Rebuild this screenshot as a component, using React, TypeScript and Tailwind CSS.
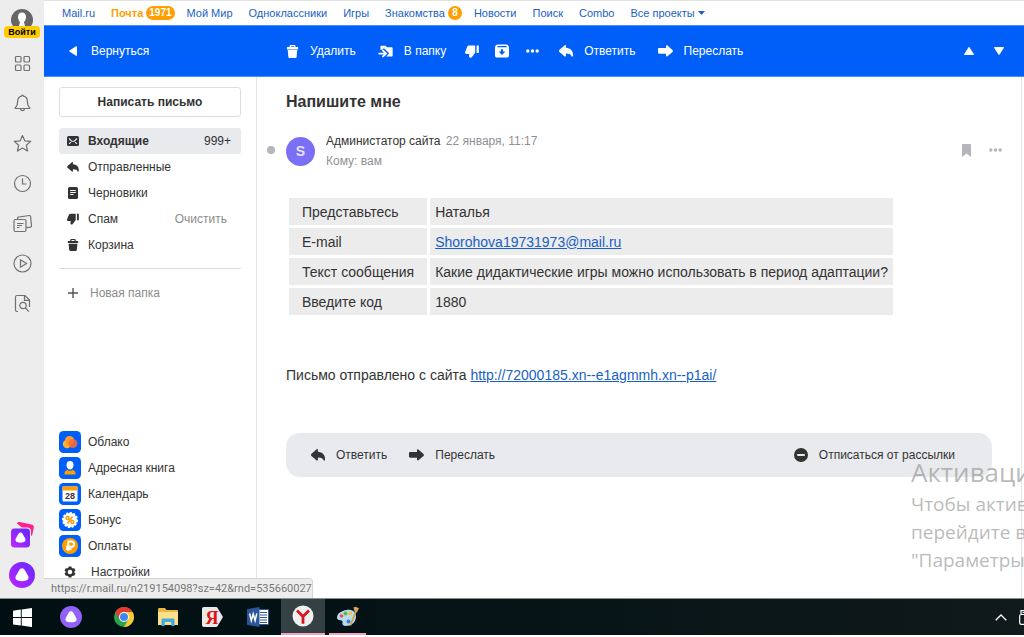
import { ReactNode } from "react";

type IconProps = { className?: string };

const TrashIcon = ({ className }: IconProps) => (
  <svg viewBox="0 0 14 14" fill="currentColor" className={className}>
    <path d="M1 2.200h2.800V1.400C3.800.6 4.400 0 5.200 0h3.600c.8 0 1.400.6 1.400 1.400v.8H13v2.600H1zM5.300 1.300v.9h3.400v-.9zM1.900 5.400h10.200l-.6 7.200c-.1.900-.6 1.400-1.500 1.400H4c-.9 0-1.400-.5-1.500-1.400z" />
  </svg>
);

const ReplyIcon = ({ className }: IconProps) => (
  <svg viewBox="0 0 14 12" fill="currentColor" className={className}>
    <path d="M6.900.6v2.200c4.600.3 7.100 3.100 7.100 7 0 .7 0 1.200-.1 1.700h-1.300c-.4-1.900-2.100-2.900-5.700-2.900v2.300c0 .7-.7.900-1.200.5L.5 7C-.2 6.400-.2 5.400.5 4.800L5.700.200c.5-.4 1.200-.200 1.200.4z" />
  </svg>
);

const ForwardIcon = ({ className }: IconProps) => (
  <svg viewBox="0 0 15 12" fill="currentColor" className={className}>
    <path d="M8 1v2H1.300C.4 3 0 3.500 0 4.300v3c0 .9.4 1.400 1.300 1.400H8v2c0 .8.8 1.100 1.400.6l5.100-4.400c.6-.5.6-1.500 0-2L9.400.4C8.800-.1 8 .2 8 1z" />
  </svg>
);

const ThumbIcon = ({ className }: IconProps) => (
  <svg viewBox="0 0 14 13" fill="currentColor" className={className}>
    <path d="M4.200.500h6v7.300l-3.500 4.400c-1.100 1.200-3 .500-2.700-1.200l.4-2.100H1.500C.3 8.900-.3 8 .1 6.900l2-5C2.500 1 3.200.5 4.200.5zM11.600.500h2.200v7.500h-2.200z" />
  </svg>
);

const FolderIcon = ({ className }: IconProps) => (
  <svg viewBox="0 0 16 14" fill="currentColor" className={className}>
    <path d="M2.500 5V2.200C2.500 1.300 3 .8 3.900.8H8l1.500 1.600h4.800c.9 0 1.400.5 1.400 1.400v7.300c0 .9-.5 1.400-1.400 1.400H8.700L12 9 6.200 3.500 4.600 5.100z" />
    <path d="M.5 9.200h7M4.700 5.600l3.900 3.600-3.900 3.600" fill="none" stroke="currentColor" strokeWidth="1.900" />
  </svg>
);

const ArchiveIcon = ({ className }: IconProps) => (
  <svg viewBox="0 0 14 14" fill="currentColor" fillRule="evenodd" className={className}>
    <path d="M3 .5h8c1.500 0 3 1.300 3 3v8c0 1.400-.7 2-2 2H2c-1.300 0-2-.6-2-2v-8c0-1.700 1.500-3 3-3zM2.800 2.100L2 3.300h10l-.8-1.200zM5.900 5.200v2.300H3.600L7 11l3.400-3.500H8.100V5.200z" />
  </svg>
);

const DotsIcon = ({ className }: IconProps) => (
  <svg viewBox="0 0 13 4" fill="currentColor" className={className}>
    <circle cx="1.800" cy="2" r="1.700" />
    <circle cx="6.500" cy="2" r="1.700" />
    <circle cx="11.200" cy="2" r="1.700" />
  </svg>
);

const MailIcon = ({ className }: IconProps) => (
  <svg viewBox="0 0 12 10" className={className}>
    <rect width="12" height="10" rx="1.500" fill="currentColor" />
    <path d="M2 2.500l2.700 2.700h2.600L10 2.500M2 7.800l2-1.700M10 7.800L8 6.100" stroke="#e9eaee" strokeWidth="1.100" fill="none" />
  </svg>
);

const DraftIcon = ({ className }: IconProps) => (
  <svg viewBox="0 0 12 12" className={className}>
    <rect x="1" width="10" height="12" rx="1.600" fill="currentColor" />
    <path d="M3.200 3.500h5.600M3.200 5.500h5.600M3.200 7.500h3.300" stroke="#fff" strokeWidth="1" />
  </svg>
);

const GearIcon = ({ className }: IconProps) => (
  <svg viewBox="0 0 12 12" className={className}>
    <path d="M6 .4v11.200M1.200 3.200l9.600 5.600M10.800 3.200L1.200 8.800" stroke="currentColor" strokeWidth="3" />
    <circle cx="6" cy="6" r="4.500" fill="currentColor" />
    <circle cx="6" cy="6" r="2.300" fill="#fff" />
  </svg>
);

const AliceMark = ({ className, round }: IconProps & { round?: boolean }) => (
  <svg viewBox="0 0 26 26" className={className}>
    <defs>
      <linearGradient id="alice" x1="0" y1="1" x2="1" y2="0">
        <stop offset="0" stopColor="#c026ff" />
        <stop offset="1" stopColor="#5f29ff" />
      </linearGradient>
    </defs>
    {round ? (
      <circle cx="13" cy="13" r="13" fill="url(#alice)" />
    ) : (
      <>
        <path d="M8 1.600C8.400.400 9.200-.100 10.500.100l12 2.400c1.700.4 2.600 1.700 2.200 3.400L23 14z" fill="#ff1f8f" />
        <rect x="1" y="5.500" width="21" height="21" rx="4" fill="#ededed" />
        <rect x="2" y="6.500" width="19" height="19" rx="3.500" fill="url(#alice)" />
      </>
    )}
    <path
      d={
        round
          ? "M13 6.200c1.300 0 2.100.7 2.900 2.100l3.200 5.800c1.500 2.900-.8 5.200-6.100 5.200s-7.600-2.300-6.100-5.200l3.200-5.800c.8-1.400 1.600-2.100 2.900-2.100z"
          : "M11.500 10.500c1 0 1.600.6 2.200 1.600l2.500 4.500c1.100 2.200-.6 4.200-4.700 4.200s-5.800-2-4.700-4.200l2.500-4.500c.6-1 1.200-1.600 2.200-1.600z"
      }
      fill="#fff"
    />
  </svg>
);

const navLinks: { label: string; badge?: string; active?: boolean; arrow?: boolean }[] = [
  { label: "Mail.ru" },
  { label: "Почта", badge: "1971", active: true },
  { label: "Мой Мир" },
  { label: "Одноклассники" },
  { label: "Игры" },
  { label: "Знакомства", badge: "8" },
  { label: "Новости" },
  { label: "Поиск" },
  { label: "Combo" },
  { label: "Все проекты", arrow: true },
];

const folders = [
  { label: "Входящие", icon: <MailIcon className="w-3 h-[10px]" />, count: "999+" },
  { label: "Отправленные", icon: <ReplyIcon className="w-3 h-[10px]" /> },
  { label: "Черновики", icon: <DraftIcon className="size-3" /> },
  { label: "Спам", icon: <ThumbIcon className="w-3 h-3" />, action: "Очистить" },
  { label: "Корзина", icon: <TrashIcon className="size-3" /> },
];

const services: { label: string; icon: ReactNode }[] = [
  {
    label: "Облако",
    icon: (
      <>
        <circle cx="8" cy="13" r="4.200" fill="#ffb02e" />
        <circle cx="10.500" cy="9.500" r="4.500" fill="#ff9e2c" />
        <circle cx="13.800" cy="12.500" r="4.600" fill="#ff6a33" fillOpacity=".85" />
      </>
    ),
  },
  {
    label: "Адресная книга",
    icon: (
      <>
        <path d="M11 4c2.300 0 3.500 1.500 3.500 4S13 12.500 11 12.500 7.500 10.500 7.500 8 8.700 4 11 4z" fill="#fff" />
        <path d="M5.500 17.500v-1.500c0-2 1.500-2.800 3.300-3.100.8 1.200 3.600 1.200 4.400 0 1.800.3 3.300 1.100 3.300 3.100v1.500z" fill="#ff9e00" />
      </>
    ),
  },
  {
    label: "Календарь",
    icon: (
      <>
        <rect x="3.500" y="3.500" width="15" height="15" rx="1" fill="#fff" />
        <path d="M3.500 3.500h15v4h-15z" fill="#ff9e00" />
        <text x="11" y="15.500" textAnchor="middle" fontSize="9" fontWeight="700" fill="#333">
          28
        </text>
      </>
    ),
  },
  {
    label: "Бонус",
    icon: (
      <>
        <circle cx="11" cy="11" r="7" fill="#fff" stroke="#fff" strokeWidth="2" strokeDasharray="2.200 1.400" />
        <circle cx="8.600" cy="9" r="1.500" fill="none" stroke="#ff9e00" strokeWidth="1.500" />
        <circle cx="13.400" cy="13" r="1.500" fill="none" stroke="#ff9e00" strokeWidth="1.500" />
        <path d="M13.500 7.500l-5 7" stroke="#ff9e00" strokeWidth="1.500" />
      </>
    ),
  },
  {
    label: "Оплаты",
    icon: (
      <>
        <circle cx="11" cy="11" r="8" fill="#ff9e00" />
        <path d="M9.300 16V6.500h2.900c3.900 0 3.900 5.300 0 5.300H7M7 14h5.500" fill="none" stroke="#fff" strokeWidth="1.900" />
      </>
    ),
  },
];

const fields = [
  { name: "Представьтесь", value: "Наталья" },
  { name: "E-mail", value: "Shorohova19731973@mail.ru", link: true },
  { name: "Текст сообщения", value: "Какие дидактические игры можно использовать в период адаптации?" },
  { name: "Введите код", value: "1880" },
];

const railIcons: { label: string; icon: ReactNode }[] = [
  {
    label: "Табло",
    icon: (
      <>
        <rect x="2.500" y="2.500" width="5.500" height="5.500" rx="1" />
        <rect x="11" y="2.500" width="5.500" height="5.500" rx="1" />
        <rect x="2.500" y="11" width="5.500" height="5.500" rx="1" />
        <rect x="11" y="11" width="5.500" height="5.500" rx="1" />
      </>
    ),
  },
  {
    label: "Уведомления",
    icon: <path d="M8.500 2.200c0-1.400 2-1.400 2 0 2.600.6 3.800 2.500 3.900 5 .1 3.700.9 5.300 2.300 6.300.4.500.2 1-.4 1H2.700c-.6 0-.8-.5-.4-1 1.400-1 2.200-2.600 2.300-6.300.1-2.500 1.300-4.400 3.900-5zM7.500 14.700c.2 2.600 3.800 2.600 4 0" />,
  },
  {
    label: "Избранное",
    icon: <path d="M9.500 1.500l2.300 5.300 5.900.6-4.400 3.800 1.300 5.800-5.100-3-5.100 3 1.300-5.800L1.300 7.400l5.900-.6z" strokeLinejoin="round" />,
  },
  {
    label: "История",
    icon: (
      <>
        <circle cx="9.500" cy="9.500" r="8" />
        <path d="M9.500 4.500v5.500h4" />
      </>
    ),
  },
  {
    label: "Коллекции",
    icon: (
      <>
        <rect x="1" y="5.500" width="12" height="12" rx="1.500" />
        <path d="M4.500 5.300l.4-2.100 11.300-1.700c.8-.1 1.300.2 1.400 1l.9 9.300c0 .8-.3 1.200-1 1.300l-4.200.5M4 9.500h6.500M4 11.500h5M4 13.500h2.500" />
      </>
    ),
  },
  {
    label: "Видео",
    icon: (
      <>
        <circle cx="9.500" cy="9.500" r="8.500" />
        <path d="M7.500 5.800v7.400l6-3.700z" />
      </>
    ),
  },
  {
    label: "Поиск по странице",
    icon: (
      <>
        <path d="M5 17.500H4c-1 0-1.500-.5-1.500-1.500V3c0-1 .5-1.500 1.500-1.500h8l4.500 4.500v7M11.500 1.700v4.600h4.800" />
        <circle cx="10" cy="11.500" r="3.200" />
        <path d="M12.400 14l3.600 3.600" />
      </>
    ),
  },
];

const Rail = () => (
  <aside className="w-11 shrink-0 bg-[#ededed] flex flex-col items-center pb-2.5">
    <button aria-label="Войти" className="flex flex-col items-center mt-2 h-[31px]">
      <svg viewBox="0 0 22 18" className="w-[22px] h-[18px] shrink-0">
        <path d="M11 1a11 11 0 0 1 11 11c0 2.500-.8 4.500-2 6H2c-1.200-1.500-2-3.500-2-6A11 11 0 0 1 11 1z" fill="#666" />
        <path d="M11 4.500c2.800 0 4 1.800 4 4.500 0 2.500-1.200 4.200-2 5.200l1 3.800H8l1-3.800c-.8-1-2-2.700-2-5.200 0-2.700 1.200-4.500 4-4.500z" fill="#fff" />
      </svg>
      <span className="w-9 h-3 rounded-sm bg-[#ffcc00] text-black text-[9px] leading-3 font-bold">Войти</span>
    </button>
    <div className="flex flex-col gap-[21px] mt-[15px]">
      {railIcons.map((item) => (
        <button key={item.label} aria-label={item.label}>
          <svg viewBox="0 0 19 19" className="size-[19px]" fill="none" stroke="#707070" strokeWidth="1.200">
            {item.icon}
          </svg>
        </button>
      ))}
    </div>
    <div className="mt-auto flex flex-col items-center gap-3.5">
      <button aria-label="Коллекции Алисы">
        <AliceMark className="size-[26px]" />
      </button>
      <button aria-label="Алиса">
        <AliceMark round className="size-[26px]" />
      </button>
    </div>
  </aside>
);

const TopNav = () => (
  <nav className="h-[25px] border-t border-[#e2e2e2] flex items-center gap-4 pl-[18px] text-[11px] text-[#1a5fc4]">
    {navLinks.map((item) => (
      <a
        key={item.label}
        href="#"
        className={item.badge ? "flex items-center gap-[3px] -mr-1 whitespace-nowrap" : "flex items-center gap-[3px] whitespace-nowrap"}
      >
        <span className={item.active ? "font-bold text-[#ff9e00]" : ""}>{item.label}</span>
        {item.badge && (
          <span className="min-w-[14px] h-[14px] rounded-full bg-[#ff9e00] px-[3px] text-center text-[10px] leading-[14px] font-bold text-white">
            {item.badge}
          </span>
        )}
        {item.arrow && (
          <svg viewBox="0 0 7 4" className="w-[7px] h-1" fill="currentColor">
            <path d="M0 0h7L3.500 4z" />
          </svg>
        )}
      </a>
    ))}
  </nav>
);

const Toolbar = () => (
  <div className="h-[52px] bg-[#005ff9] border-y border-[#4a8dfb] flex items-center text-xs text-white pr-5">
    <button className="w-[242px] pl-[25px] flex items-center gap-[14px]">
      <svg viewBox="0 0 8 10" className="w-2 h-2.5" fill="currentColor">
        <path d="M8 .8v8.400c0 .6-.5.800-1 .5L.5 5.500c-.4-.3-.4-.7 0-1L7 .3c.5-.3 1-.1 1 .5z" />
      </svg>
      Вернуться
    </button>
    <button className="flex items-center gap-[11px]">
      <TrashIcon className="size-[13px]" />
      Удалить
    </button>
    <button className="ml-[22px] flex items-center gap-[11px]">
      <FolderIcon className="w-[15px] h-[13px]" />
      В папку
    </button>
    <button aria-label="Спам" className="ml-[19px]">
      <ThumbIcon className="w-[14px] h-[13px]" />
    </button>
    <button aria-label="В архив" className="ml-4">
      <ArchiveIcon className="size-[14px]" />
    </button>
    <button aria-label="Ещё" className="ml-[17px]">
      <DotsIcon className="w-[13px] h-1" />
    </button>
    <button className="ml-5 flex items-center gap-[11px]">
      <ReplyIcon className="w-[14px] h-3" />
      Ответить
    </button>
    <button className="ml-[22px] flex items-center gap-[11px]">
      <ForwardIcon className="w-[15px] h-3" />
      Переслать
    </button>
    <div className="ml-auto flex gap-5">
      <button aria-label="Предыдущее письмо">
        <svg viewBox="0 0 10 8" className="w-2.5 h-2" fill="currentColor">
          <path d="M5.600.4l4.200 6.500c.3.500.1 1.100-.5 1.100H.7c-.6 0-.8-.6-.5-1.100L4.400.4c.3-.5.900-.5 1.200 0z" />
        </svg>
      </button>
      <button aria-label="Следующее письмо">
        <svg viewBox="0 0 10 8" className="w-2.5 h-2" fill="currentColor">
          <path d="M4.400 7.600L.2 1.100C-.1.600.1 0 .7 0h8.600c.6 0 .8.6.5 1.100L5.600 7.600c-.3.500-.9.500-1.200 0z" />
        </svg>
      </button>
    </div>
  </div>
);

const Sidebar = () => (
  <div className="w-[213px] shrink-0 border-r border-[#e4e5e9] pl-[15px] pr-[15px] pt-[10px] flex flex-col text-xs text-[#333]">
    <button className="h-[30px] rounded-[3px] border border-[#dcdde3] font-bold">Написать письмо</button>
    <div className="mt-[11px]">
      {folders.map((folder) => (
        <div
          key={folder.label}
          className={
            folder.count
              ? "h-[26px] flex items-center rounded-[3px] bg-[#e9eaee] pl-2 pr-[10px]"
              : "h-[26px] flex items-center pl-2 pr-[14px]"
          }
        >
          <a href="#" className={folder.count ? "flex items-center gap-[9px] font-bold" : "flex items-center gap-[9px]"}>
            {folder.icon}
            {folder.label}
          </a>
          {folder.count && <span className="ml-auto">{folder.count}</span>}
          {folder.action && <button className="ml-auto text-[#8c8c8c]">{folder.action}</button>}
        </div>
      ))}
    </div>
    <hr className="mt-[10px] border-[#dcdde3]" />
    <button className="mt-4 pl-[9px] flex items-center gap-3 text-[#8c8c8c]">
      <svg viewBox="0 0 10 10" className="size-2.5" stroke="#555" strokeWidth="1.400">
        <path d="M5 0v10M0 5h10" />
      </svg>
      Новая папка
    </button>
    <div className="mt-auto mb-[15px] flex flex-col gap-1">
      {services.map((service) => (
        <a key={service.label} href="#" className="flex items-center gap-[7px]">
          <svg viewBox="0 0 22 22" className="size-[22px]">
            <rect width="22" height="22" rx="4.500" fill="#005ff9" />
            {service.icon}
          </svg>
          {service.label}
        </a>
      ))}
      <button className="h-[22px] pl-[5px] flex items-center gap-[15px]">
        <GearIcon className="size-3" />
        Настройки
      </button>
    </div>
  </div>
);

const Letter = () => (
  <main className="flex-1 min-w-0 mr-0.5 border-r border-[#e4e5e9] px-[29px] pt-[14px] text-[#333]">
    <h1 className="text-base leading-[22px] font-bold">Напишите мне</h1>
    <div className="relative mt-[18px] flex items-center">
      <span className="absolute -left-[19px] top-[15px] size-2 rounded-full bg-[#b4b5bd]" />
      <span className="size-[29px] rounded-full bg-[#7a6ff5] text-center text-sm leading-[29px] font-bold text-[#e4e2ff]">S</span>
      <div className="ml-[11px] text-xs leading-5">
        <p>
          Администатор сайта <span className="ml-0.5 text-[#8f9196]">22 января, 11:17</span>
        </p>
        <p className="text-[#8f9196]">Кому: вам</p>
      </div>
      <button aria-label="Отметить флажком" className="ml-auto mb-0.5 text-[#b4b5bd]">
        <svg viewBox="0 0 9 13" className="w-[9px] h-[13px]" fill="currentColor">
          <path d="M1.300 0h6.400C8.600 0 9 .4 9 1.300V13L4.500 9.500 0 13V1.300C0 .4.400 0 1.300 0z" />
        </svg>
      </button>
      <button aria-label="Ещё" className="ml-[18px] -mr-[10px] mb-0.5 text-[#b4b5bd]">
        <DotsIcon className="w-[13px] h-1" />
      </button>
    </div>

    <table className="mt-6 border-separate border-spacing-[3px] text-sm leading-5">
      <tbody>
        {fields.map((field) => (
          <tr key={field.name}>
            <th scope="row" className="h-[27px] bg-[#ececec] px-[13px] text-left font-normal whitespace-nowrap">
              {field.name}
            </th>
            <td className="h-[27px] bg-[#ececec] px-[5px]">
              {field.link ? (
                <a href="#" className="text-[#1a5fc4] underline">
                  {field.value}
                </a>
              ) : (
                field.value
              )}
            </td>
          </tr>
        ))}
      </tbody>
    </table>

    <p className="mt-[47px] text-sm leading-5">
      Письмо отправлено с сайта{" "}
      <a href="#" className="text-[#1a5fc4] underline">
        http://72000185.xn--e1agmmh.xn--p1ai/
      </a>
    </p>

    <div className="mt-12 h-11 rounded-[14px] bg-[#e9eaee] flex items-center pl-[25px] pr-[37px] text-xs">
      <button className="flex items-center gap-[11px]">
        <ReplyIcon className="w-[14px] h-3" />
        Ответить
      </button>
      <button className="ml-[22px] flex items-center gap-[11px]">
        <ForwardIcon className="w-[15px] h-3" />
        Переслать
      </button>
      <button className="ml-auto flex items-center gap-[11px]">
        <svg viewBox="0 0 14 14" className="size-[14px]">
          <circle cx="7" cy="7" r="7" fill="#333" />
          <path d="M3.200 7h7.600" stroke="#fff" strokeWidth="1.800" />
        </svg>
        Отписаться от рассылки
      </button>
    </div>
  </main>
);

const Taskbar = () => (
  <footer className="h-9 bg-linear-to-r from-[#000f12] to-[#10191b] flex items-center">
    <button aria-label="Пуск" className="w-11 flex justify-center">
      <svg viewBox="0 0 19 19" className="size-[19px]" fill="#fff">
        <path d="M0 2.700l7.800-1.100v7.500H0zM8.700 1.500L19 0v9.100H8.700zM0 10h7.800v7.500L0 16.400zM8.700 10H19v9.100L8.700 17.600z" />
      </svg>
    </button>
    <button aria-label="Алиса" className="w-[54px] flex justify-center">
      <svg viewBox="0 0 22 22" className="size-[22px]">
        <circle cx="11" cy="11" r="11" fill="#9161f8" />
        <path d="M11 5.200c1.100 0 1.800.6 2.500 1.800l2.700 4.900c1.300 2.500-.7 4.400-5.200 4.400s-6.500-1.900-5.200-4.400L8.500 7c.7-1.200 1.400-1.800 2.500-1.800z" fill="#fff" />
      </svg>
    </button>
    <button aria-label="Chrome" className="ml-1 w-[43px] flex justify-center">
      <svg viewBox="0 0 20 20" className="size-5">
        <circle cx="10" cy="10" r="10" fill="#2ba24c" />
        <path d="M10 10L1.340 5A10 10 0 0 1 18.660 5z" fill="#e33b2e" />
        <path d="M10 5h8.660A10 10 0 0 1 10 20l4.330-7.500z" fill="#fcc934" />
        <path d="M1.340 5l4.330 7.500L10 10V5z" fill="#e33b2e" />
        <circle cx="10" cy="10" r="5" fill="#fff" />
        <circle cx="10" cy="10" r="4" fill="#4285f4" />
      </svg>
    </button>
    <button aria-label="Проводник" className="w-[45px] flex justify-center">
      <svg viewBox="0 0 20 18" className="w-5 h-[18px]">
        <path d="M0 1.500C0 .7.500 0 1.300 0H7l1.500 2H19c.6 0 1 .4 1 1v14H0z" fill="#e9b944" />
        <path d="M0 4h20v13H0z" fill="#fde08a" />
        <path d="M3.500 18v-6c0-1 .5-1.500 1.500-1.500h10c1 0 1.500.5 1.500 1.500v6h-3.300v-4H6.800v4z" fill="#3fa9e0" />
      </svg>
    </button>
    <button aria-label="Яндекс" className="w-[45px] flex justify-center">
      <svg viewBox="0 0 21 20" className="w-[21px] h-5">
        <path d="M2 0h12c.7 0 1.200.3 1.600.9L21 10l-5.400 9.100c-.4.600-.9.900-1.600.9H2c-1.300 0-2-.7-2-2V2C0 .7.700 0 2 0z" fill="#e9e9e9" />
        <text x="3.500" y="16.500" fontSize="18" fontWeight="700" fill="#e01212" className="font-['Liberation_Serif',serif]">
          Я
        </text>
      </svg>
    </button>
    <button aria-label="Word" className="w-[46px] flex justify-center">
      <svg viewBox="0 0 22 20" className="w-[22px] h-5">
        <path d="M11 2.500h10.500v15H11z" fill="#fff" stroke="#2b579a" />
        <path d="M13 5.500h7M13 8h7M13 10.500h7M13 13h7M13 15.500h7" stroke="#2b579a" strokeWidth="1.200" />
        <path d="M0 2.200L12.500 0v20L0 17.800z" fill="#2b579a" />
        <path d="M2.600 6.500l1.700 7 1.900-6.500 1.900 6.500 1.700-7" fill="none" stroke="#fff" strokeWidth="1.500" />
      </svg>
    </button>
    <button aria-label="Яндекс.Браузер" className="w-11 h-9 border-b-2 border-[#f2a3c0] bg-[#334144] flex items-center justify-center">
      <svg viewBox="0 0 22 22" className="size-[22px]">
        <circle cx="11" cy="11" r="10.500" fill="#f0f0f0" />
        <path d="M5 5.500l6 6 6-6M11 11v7.800" fill="none" stroke="#d8141c" strokeWidth="2.800" />
      </svg>
    </button>
    <button aria-label="Paint" className="ml-1 w-[37px] h-9 border-b-2 border-[#f2a3c0] flex items-center justify-center">
      <svg viewBox="0 0 22 21" className="w-[22px] h-[21px]">
        <path d="M9.500 4c5.500-.8 9.500 1.800 9.500 6.500 0 5.500-4.300 9.500-10 9.500-3 0-4-1.500-3.500-3.200.5-1.800-.3-2.600-2.200-2.600C1.200 14.200 0 13.300 0 11.500 0 7.500 4.500 4.700 9.500 4z" fill="#b5dbf0" />
        <circle cx="4.500" cy="10" r="1.800" fill="#e8543f" />
        <circle cx="8.500" cy="7.500" r="1.900" fill="#63b745" />
        <circle cx="13" cy="7.300" r="1.900" fill="#f0c33c" />
        <circle cx="11.500" cy="15.500" r="2" fill="#3d7fd0" />
        <path d="M12.500 19.500L18.200 5l1.600.7L14 19.800z" fill="#e09a3e" />
        <path d="M17.500 5.500l-1-4 2-.8 3.500 1.500-2 4z" fill="#d8a565" />
      </svg>
    </button>
    <button aria-label="Показать скрытые значки" className="ml-auto mr-3">
      <svg viewBox="0 0 12 7" className="w-3 h-[7px]" fill="none" stroke="#fff" strokeWidth="1.300">
        <path d="M.7 6.300L6 1l5.300 5.300" />
      </svg>
    </button>
    <svg viewBox="0 0 5 15" className="w-[5px] h-[15px]" fill="none" stroke="#fff" strokeWidth="1.200">
      <path d="M5 4.500H2.200c-1 0-1.500.5-1.500 1.500v7c0 .9.500 1.400 1.500 1.400H5M2 4V.7h3M3.500 2.500H5" />
    </svg>
  </footer>
);

const App = () => {
  return (
    <div className="min-h-screen flex flex-col bg-white pb-0.5 font-['Liberation_Sans',Arial,sans-serif]">
      <div className="relative flex-1 flex border-b border-[#8a8f90]">
        <Rail />
        <div className="flex-1 min-w-0 flex flex-col">
          <TopNav />
          <Toolbar />
          <div className="flex-1 flex">
            <Sidebar />
            <Letter />
          </div>
        </div>

        {/* link preview in the corner of the browser window */}
        <div className="absolute left-11 bottom-0 h-5 rounded-tr border-t border-r border-[#d5d5d5] bg-[#ededed] pl-[7px] text-[11px] leading-5 text-[#777] font-[Roboto,sans-serif]">
          https://r.mail.ru/n219154098?sz=42&amp;rnd=535660027
        </div>

        <div className="absolute right-0 bottom-6 w-[113px] overflow-hidden whitespace-nowrap text-[19px] leading-7 text-[#8c8c8c]/60 font-['Open_Sans',sans-serif] pointer-events-none">
          <p className="text-[26px] leading-9">Активация</p>
          <p>Чтобы активировать</p>
          <p>перейдите в раздел</p>
          <p>"Параметры".</p>
        </div>
      </div>
      <Taskbar />
    </div>
  );
};

export default App;
